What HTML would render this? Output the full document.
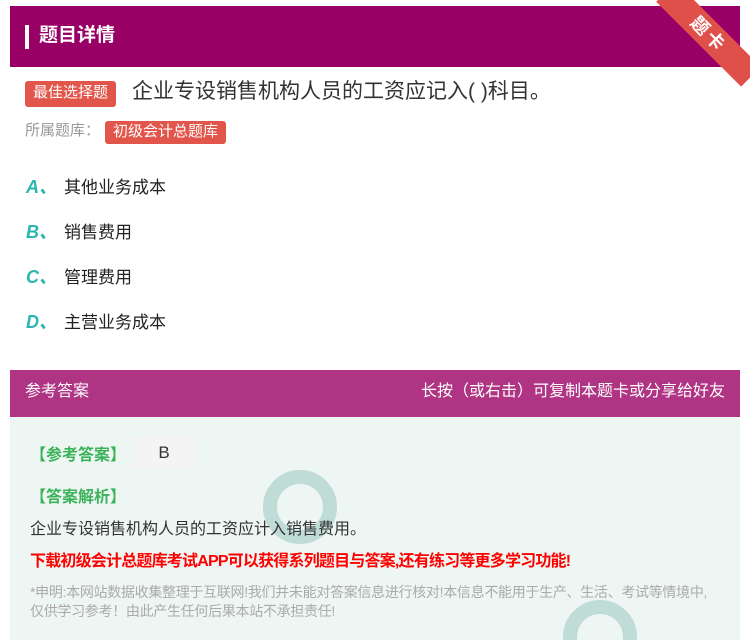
<!DOCTYPE html>
<html><head><meta charset="utf-8"><style>
*{margin:0;padding:0;box-sizing:border-box}
body{width:750px;height:640px;background:#fff;font-family:"Liberation Sans","Noto Sans CJK SC",sans-serif;position:relative;overflow:hidden}
.hd{position:absolute;left:10px;top:6px;width:730px;height:61px;background:#990066}
.hd .bar{position:absolute;left:15px;top:19px;width:4px;height:24px;background:#fff}
.hd .t{position:absolute;left:29px;top:16px;color:#fff;font-size:19px;font-weight:bold;line-height:28px}
.rib{position:absolute;left:676px;top:-18px;width:120px;height:28px;background:#e0504a;transform:rotate(45deg);transform-origin:0 0;color:#fff;font-size:18px;font-weight:bold;text-align:center;line-height:28px;letter-spacing:3px;}
.tag{position:absolute;background:#e2554a;color:#fff;border-radius:3px;font-size:15px;line-height:24px;padding:0 8px}
.q{position:absolute;left:132px;top:77px;font-size:21px;color:#333;line-height:30px}
.lib{position:absolute;left:25px;top:120px;font-size:15px;color:#999;line-height:22px}
.opt{position:absolute;left:26px;font-size:17px;color:#222;line-height:24px}
.opt b{color:#2bb5b0;font-style:italic;font-size:18px;display:inline-block;width:38px}
.ah{position:absolute;left:10px;top:370px;width:730px;height:47px;background:#af3483;color:#fff;font-size:16px;line-height:44px}
.ab{position:absolute;left:10px;top:417px;width:730px;height:223px;background:#eef6f4}
.g{color:#3cb35a;font-size:16px;font-weight:bold;position:absolute}
</style></head><body>
<div class="hd"><div class="bar"></div><div class="t">题目详情</div></div>
<div class="rib">题卡</div>
<div class="tag" style="left:25px;top:81px;height:26px;line-height:24px">最佳选择题</div>
<div class="q">企业专设销售机构人员的工资应记入( )科目。</div>
<div class="lib">所属题库：</div>
<div class="tag" style="left:105px;top:121px;height:23px;line-height:21px">初级会计总题库</div>
<div class="opt" style="top:175px"><b>A、</b>其他业务成本</div>
<div class="opt" style="top:220px"><b>B、</b>销售费用</div>
<div class="opt" style="top:265px"><b>C、</b>管理费用</div>
<div class="opt" style="top:310px"><b>D、</b>主营业务成本</div>
<div class="ah"><span style="position:absolute;left:15px">参考答案</span><span style="position:absolute;right:15px">长按（或右击）可复制本题卡或分享给好友</span></div>
<div class="ab">
<svg width="730" height="223" style="position:absolute;left:0;top:0">
<circle cx="290" cy="90" r="30" fill="none" stroke="#bfdcd6" stroke-width="14"/>
<circle cx="590" cy="220" r="30" fill="none" stroke="#bfdcd6" stroke-width="14"/>
</svg>
<div class="g" style="left:20px;top:24px">【参考答案】</div>
<div style="position:absolute;left:122px;top:20px;width:64px;height:32px;background:#f4f4f4;font-size:17px;color:#333;text-align:center;line-height:32px">B</div>
<div class="g" style="left:20px;top:66px">【答案解析】</div>
<div style="position:absolute;left:20px;top:98px;font-size:16px;color:#333">企业专设销售机构人员的工资应计入销售费用。</div>
<div style="position:absolute;left:20px;top:130px;font-size:16px;color:#f00;font-weight:bold;letter-spacing:-0.8px">下载初级会计总题库考试APP可以获得系列题目与答案,还有练习等更多学习功能!</div>
<div style="position:absolute;left:20px;top:166px;width:690px;font-size:14px;color:#aaa;line-height:19px;letter-spacing:-0.3px">*申明:本网站数据收集整理于互联网!我们并未能对答案信息进行核对!本信息不能用于生产、生活、考试等情境中,仅供学习参考！由此产生任何后果本站不承担责任!</div>
</div>
</body></html>
